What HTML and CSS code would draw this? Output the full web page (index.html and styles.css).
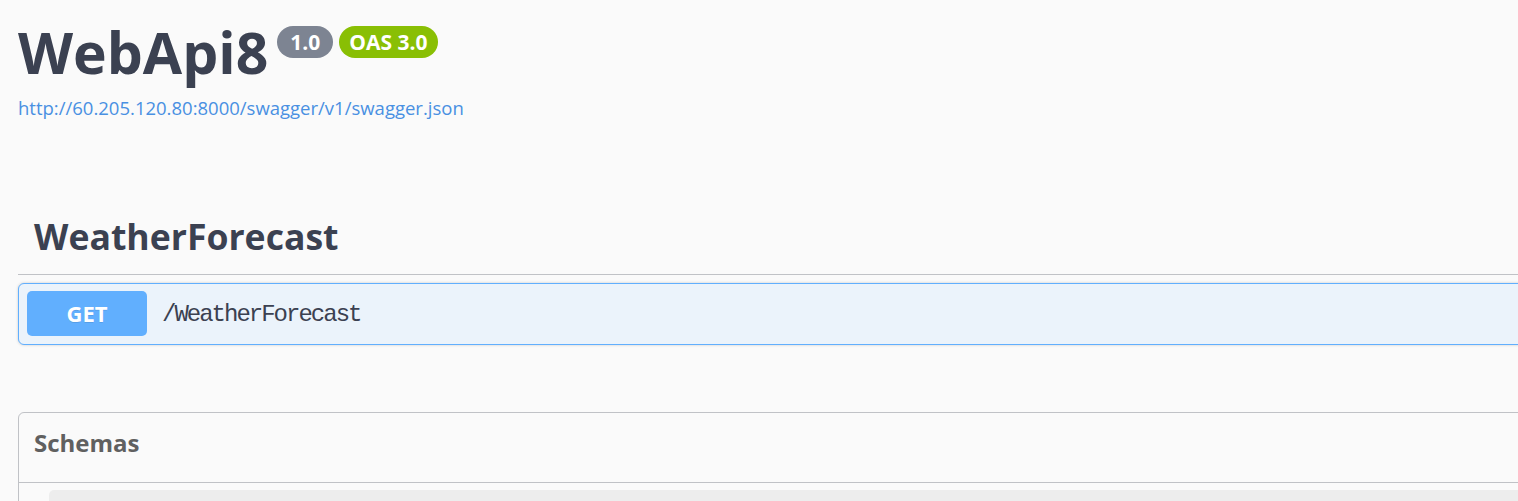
FILE: index.html
```html
<!DOCTYPE html>
<html lang="en">
<head>
<meta charset="utf-8">
<title>WebApi8</title>
<link rel="stylesheet" href="styles.css">
</head>
<body>
<div class="page">
  <div class="wrapper">
    <section class="info">
      <h2 class="title">
        <span class="title-text">WebApi8</span>
        <span class="badge badge-version">1.0</span>
        <span class="badge badge-oas">OAS 3.0</span>
      </h2>
      <a class="spec-link" href="#">http://60.205.120.80:8000/swagger/v1/swagger.json</a>
    </section>

    <section class="tag-section">
      <h3 class="tag">WeatherForecast</h3>
      <div class="opblock">
        <span class="method">GET</span>
        <span class="path">/WeatherForecast</span>
      </div>
    </section>

    <section class="models">
      <h4 class="models-title">Schemas</h4>
      <div class="model-container"></div>
    </section>
  </div>
</div>
</body>
</html>
```

FILE: styles.css
```css
html, body {
  margin: 0;
  padding: 0;
  background: #fafafa;
}

.page {
  width: 100%;
  height: 501px;
  overflow: hidden;
}

.wrapper {
  width: 1620px;
  padding: 18px 0 0 18px;
  font-family: "Open Sans", "Noto Sans", sans-serif;
  color: #3b4151;
}

.info {
  display: flex;
  flex-direction: column;
  align-items: flex-start;
}

.title {
  margin: 0;
  display: flex;
  align-items: flex-start;
  font-size: 57px;
  line-height: 68px;
  font-weight: 700;
  color: #3b4151;
}

.badge {
  margin-top: 8px;
  height: 32px;
  line-height: 32px;
  border-radius: 16px;
  font-size: 21px;
  font-weight: 700;
  color: #fff;
}

.badge-version {
  margin-left: 9px;
  padding: 0 13px;
  background: #7d8492;
}

.badge-oas {
  margin-left: 6px;
  padding: 0 10px;
  background: #89bf04;
}

.spec-link {
  margin-top: 11px;
  font-size: 18.5px;
  line-height: 22px;
  color: #4990e2;
  text-decoration: none;
}

.tag-section {
  margin-top: 91px;
}

.tag {
  margin: 0 0 8px;
  padding: 0 0 12px 16px;
  font-size: 35.6px;
  line-height: 52px;
  font-weight: 700;
  color: #3b4151;
  border-bottom: 1px solid rgba(59, 65, 81, 0.3);
}

.opblock {
  display: flex;
  align-items: center;
  height: 60px;
  padding: 0 8px;
  border: 1px solid #61affe;
  border-radius: 6px;
  background: #ebf3fb;
  box-shadow: 0 0 3px rgba(0, 0, 0, 0.19);
}

.method {
  width: 120px;
  height: 45px;
  margin-top: -1px;
  line-height: 45px;
  text-align: center;
  border-radius: 5px;
  background: #61affe;
  color: #fff;
  font-size: 22px;
  font-weight: 700;
  text-shadow: 0 1px 0 rgba(0, 0, 0, 0.1);
}

.path {
  margin-left: 15px;
  font-family: "Liberation Mono", monospace;
  font-size: 24px;
  letter-spacing: -2px;
  color: #3b4151;
}

.models {
  margin-top: 67px;
  border: 1px solid rgba(59, 65, 81, 0.3);
  border-radius: 6px;
}

.models-title {
  margin: 0;
  padding: 12px 20px 22px 15px;
  font-size: 24px;
  line-height: 35px;
  font-weight: 700;
  color: #606060;
  border-bottom: 1px solid rgba(59, 65, 81, 0.3);
}

.model-container {
  margin: 7px 30px 15px;
  height: 60px;
  border-radius: 5px;
  background: rgba(0, 0, 0, 0.05);
}
```
